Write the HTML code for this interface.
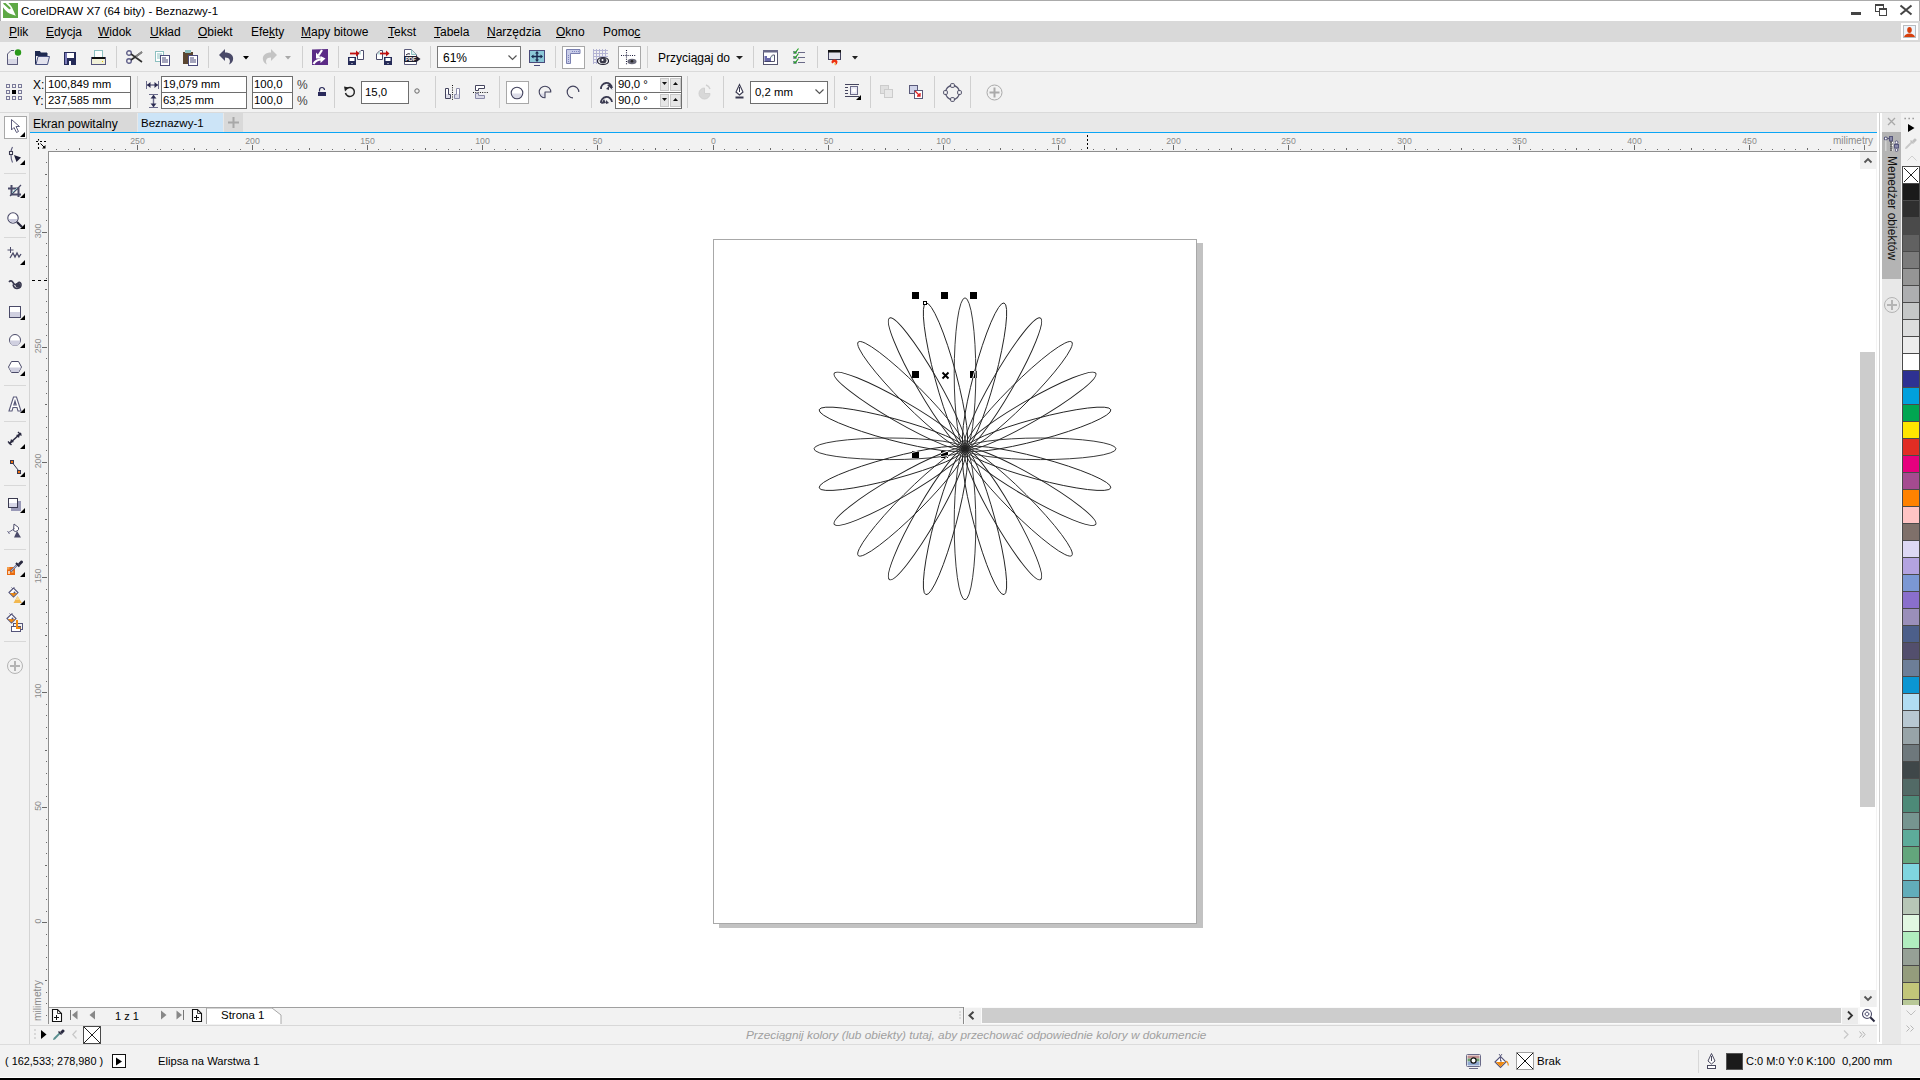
<!DOCTYPE html><html><head><meta charset="utf-8"><style>
html,body{margin:0;padding:0}
body{width:1920px;height:1080px;overflow:hidden;position:relative;background:#f2f2f2;font-family:"Liberation Sans",sans-serif;font-size:12px;color:#000}
.a{position:absolute}
.t{white-space:nowrap;line-height:1}
svg{overflow:visible}
u{text-decoration:underline;text-underline-offset:1px;text-decoration-thickness:1px}
</style></head><body>
<div class="a " style="left:0px;top:0px;width:1920px;height:1px;background:#ababab"></div>
<div class="a " style="left:0px;top:0px;width:1px;height:21px;background:#ababab"></div>
<div class="a " style="left:1919px;top:0px;width:1px;height:21px;background:#ababab"></div>
<div class="a " style="left:1px;top:1px;width:1918px;height:20px;background:#fff"></div>
<svg class="a" style="left:3px;top:3px;overflow:hidden" width="15" height="15" viewBox="0 0 15 15"><rect x="0" y="0" width="15" height="15" fill="#5ea845"/><path d="M0 0 H5.3 C7.5 2 9 4 9.8 6.2 L12.8 12.7 L6.5 10.5 C3.5 9 1.5 6.5 0 4.3 Z" fill="#fff"/><path d="M1.4 0.4 L6.6 5.2" stroke="#5ea845" stroke-width="2.1" stroke-linecap="round"/></svg>
<div class="a t" style="left:21px;top:6px;font-size:11.5px;color:#000">CorelDRAW X7 (64 bity) - Beznazwy-1</div>
<div class="a " style="left:1851px;top:12px;width:10px;height:3px;background:#444"></div>
<svg class="a" style="left:1875px;top:4px;" width="13" height="13" viewBox="0 0 13 13"><rect x="0.5" y="0.5" width="8" height="7" fill="none" stroke="#444"/><rect x="0" y="0" width="9" height="2" fill="#444"/><rect x="4.5" y="4.5" width="7" height="7" fill="#fff" stroke="#444"/><rect x="4" y="4" width="8" height="2" fill="#444"/></svg>
<svg class="a" style="left:1900px;top:5px;" width="12" height="10" viewBox="0 0 12 10"><path d="M0.5 0.5 L11.5 9.5 M11.5 0.5 L0.5 9.5" stroke="#444" stroke-width="2"/></svg>
<div class="a " style="left:0px;top:21px;width:1920px;height:21px;background:#d9d9d9"></div>
<div class="a t" style="left:9px;top:26px;font-size:12px"><u>P</u>lik</div>
<div class="a t" style="left:46px;top:26px;font-size:12px"><u>E</u>dycja</div>
<div class="a t" style="left:98px;top:26px;font-size:12px"><u>W</u>idok</div>
<div class="a t" style="left:150px;top:26px;font-size:12px"><u>U</u>kład</div>
<div class="a t" style="left:198px;top:26px;font-size:12px"><u>O</u>biekt</div>
<div class="a t" style="left:251px;top:26px;font-size:12px">Efe<u>k</u>ty</div>
<div class="a t" style="left:301px;top:26px;font-size:12px"><u>M</u>apy bitowe</div>
<div class="a t" style="left:388px;top:26px;font-size:12px"><u>T</u>ekst</div>
<div class="a t" style="left:434px;top:26px;font-size:12px"><u>T</u>abela</div>
<div class="a t" style="left:487px;top:26px;font-size:12px"><u>N</u>arzędzia</div>
<div class="a t" style="left:556px;top:26px;font-size:12px"><u>O</u>kno</div>
<div class="a t" style="left:603px;top:26px;font-size:12px">Pomo<u>c</u></div>
<div class="a " style="left:1901px;top:23px;width:17px;height:17px;background:#fff"></div>
<svg class="a" style="left:1903px;top:25px;" width="13" height="13" viewBox="0 0 13 13"><rect x="0.5" y="0.5" width="12" height="12" fill="#eef4fb" stroke="#b9bcc0"/><ellipse cx="6.5" cy="5" rx="2.3" ry="3" fill="#d6400e"/><path d="M1 12 Q2 8.5 6.5 8.5 Q11 8.5 12 12 Z" fill="#d6400e"/></svg>
<div class="a " style="left:0px;top:42px;width:1920px;height:29px;background:#f2f2f2"></div>
<div class="a " style="left:0px;top:71px;width:1920px;height:1px;background:#dadada"></div>
<svg class="a" style="left:6px;top:49px;" width="17" height="16" viewBox="0 0 17 16"><path d="M1.5 15.5 V5 L5 1.5 H8 M11.5 8 V15.5 Z" fill="none" stroke="#5a5a7a"/><path d="M1.5 15.5 H11.5 V8" fill="none" stroke="#5a5a7a"/><rect x="2" y="10" width="9" height="5" fill="#d8d8e6"/><circle cx="12" cy="3.5" r="3.2" fill="#2a9a1a"/></svg>
<svg class="a" style="left:35px;top:51px;" width="15" height="14" viewBox="0 0 15 14"><path d="M0 0 H5 L6 2 H12 V5 H0 Z" fill="#1f2a50"/><path d="M0.5 13.5 V2 H12 V5" fill="none" stroke="#1f2a50"/><path d="M1 13.5 L3 5.5 H14.5 L12.5 13.5 Z" fill="#e3e3ee" stroke="#4a5280"/></svg>
<svg class="a" style="left:64px;top:52px;" width="12" height="13" viewBox="0 0 12 13"><rect x="0" y="0" width="12" height="13" fill="#252b58"/><rect x="1" y="1" width="2" height="11" fill="#7a7ab8"/><rect x="3" y="1" width="7" height="5" fill="#fff"/><rect x="5" y="9" width="2" height="4" fill="#fff"/></svg>
<svg class="a" style="left:91px;top:50px;" width="15" height="15" viewBox="0 0 15 15"><rect x="3.5" y="0.5" width="8" height="7" fill="#fff" stroke="#8cc0c0"/><rect x="0.5" y="7.5" width="14" height="7" fill="#f0f0d8" stroke="#55557a"/><rect x="1" y="7" width="13" height="2" fill="#111"/><rect x="11" y="11" width="1" height="1" fill="#e0c000"/></svg>
<div class="a " style="left:116px;top:46px;width:1px;height:22px;background:#d0d0d0"></div>
<svg class="a" style="left:126px;top:50px;" width="17" height="14" viewBox="0 0 17 14"><circle cx="3" cy="3" r="2.3" fill="none" stroke="#60608a" stroke-width="1.4"/><circle cx="3" cy="11" r="2.3" fill="none" stroke="#60608a" stroke-width="1.4"/><path d="M5 4 L16 12 M5 10 L16 2" stroke="#303030" stroke-width="1.6"/><path d="M10 6.5 L16 2" stroke="#888" stroke-width="1.6"/></svg>
<svg class="a" style="left:155px;top:51px;" width="15" height="15" viewBox="0 0 15 15"><rect x="0.5" y="0.5" width="8" height="10" fill="#fff" stroke="#8cc0c0"/><path d="M2 3H7M2 5H7M2 7H7" stroke="#8cc0c0"/><rect x="5.5" y="4.5" width="9" height="10" fill="#fff" stroke="#4a4a7a"/><path d="M7 7H11M7 9H13M7 11H13" stroke="#4a4a7a"/></svg>
<svg class="a" style="left:183px;top:50px;" width="15" height="16" viewBox="0 0 15 16"><rect x="0" y="2" width="10" height="12" fill="#5a4630"/><rect x="2" y="0" width="6" height="3" fill="#8cc0c0"/><rect x="5.5" y="5.5" width="9" height="10" fill="#fff" stroke="#4a4a7a"/><path d="M7 8H11M7 10H13M7 12H13" stroke="#4a4a7a"/></svg>
<div class="a " style="left:208px;top:46px;width:1px;height:22px;background:#d0d0d0"></div>
<svg class="a" style="left:218px;top:49px;" width="17" height="16" viewBox="0 0 17 16"><path d="M1 6 L7 0 V3.5 C12 3.5 16 6 15 11 C14.5 13 13 15 11 15.5 C13 12 12 8.5 7 8.5 V12 Z" fill="#4a4a68"/></svg>
<svg class="a" style="left:243px;top:56px;" width="6" height="4" viewBox="0 0 6 4"><path d="M0 0H6L3 3.5Z" fill="#000"/></svg>
<svg class="a" style="left:261px;top:49px;" width="17" height="16" viewBox="0 0 17 16"><path d="M16 6 L10 0 V3.5 C5 3.5 1 6 2 11 C2.5 13 4 15 6 15.5 C4 12 5 8.5 10 8.5 V12 Z" fill="#c4c4c4"/></svg>
<svg class="a" style="left:285px;top:56px;" width="6" height="4" viewBox="0 0 6 4"><path d="M0 0H6L3 3.5Z" fill="#a8a8a8"/></svg>
<div class="a " style="left:302px;top:46px;width:1px;height:22px;background:#d0d0d0"></div>
<svg class="a" style="left:312px;top:49px;" width="16" height="16" viewBox="0 0 16 16"><path d="M0 0.5 L16 0 V16 H0Z" fill="#5b2b86"/><path d="M10 1 L6.5 6.5" stroke="#fff" stroke-width="2.2"/><path d="M4 3.5 V9.5 H9.5Z" fill="#fff"/><path d="M1.5 15 Q4 10.5 9.5 10.5" fill="none" stroke="#fff" stroke-width="2.2"/><path d="M8.5 7 L13.5 9.5 L8.5 14Z" fill="#fff"/></svg>
<div class="a " style="left:338px;top:46px;width:1px;height:22px;background:#d0d0d0"></div>
<svg class="a" style="left:347px;top:49px;" width="18" height="17" viewBox="0 0 18 17"><path d="M10.5 10.5 V5 L14 1.5 H16.5 V10.5Z" fill="#fff" stroke="#4a4a6a"/><path d="M11 5.5 L14 2 V5.5Z" fill="#bfe0e0"/><rect x="1" y="8" width="8" height="8" fill="#252b58"/><rect x="2.5" y="9" width="5" height="3" fill="#fff"/><rect x="4.5" y="14" width="1" height="1" fill="#fff"/><path d="M3 4.5 H10" stroke="#c01010" stroke-width="1.8"/><path d="M9 1.5 L12.5 4.5 L9 7.5Z" fill="#c01010"/></svg>
<svg class="a" style="left:376px;top:49px;" width="18" height="17" viewBox="0 0 18 17"><path d="M0.5 10.5 V5 L4 1.5 H6.5 V10.5Z" fill="#fff" stroke="#4a4a6a"/><path d="M1 5.5 L4 2 V5.5Z" fill="#bfe0e0"/><rect x="8" y="8" width="8" height="8" fill="#252b58"/><rect x="9.5" y="9" width="5" height="3" fill="#fff"/><rect x="11.5" y="14" width="1" height="1" fill="#fff"/><path d="M4 4.5 H11" stroke="#c01010" stroke-width="1.8"/><path d="M10 1.5 L13.5 4.5 L10 7.5Z" fill="#c01010"/></svg>
<svg class="a" style="left:404px;top:49px;" width="18" height="17" viewBox="0 0 18 17"><path d="M0.5 15.5 V0.5 H7.5 L12.5 5.5 V15.5 Z" fill="#fff" stroke="#5a5a7a"/><path d="M7.5 0.5 V5.5 H12.5" fill="#d8ecec" stroke="#8cc0c0"/><rect x="0" y="7" width="13" height="6" rx="1" fill="#1e1e2e"/><path d="M12.5 7 L16.5 10 L12.5 13Z" fill="#1e1e2e"/><path d="M2 6 Q4 4 6 5" fill="none" stroke="#1e1e2e" stroke-width="1"/><text x="1.2" y="12.2" font-size="5.6" font-family="Liberation Sans" font-weight="bold" fill="#fff" textLength="11" lengthAdjust="spacingAndGlyphs">PDF</text></svg>
<div class="a " style="left:430px;top:46px;width:1px;height:22px;background:#d0d0d0"></div>
<div class="a " style="left:437px;top:46px;width:84px;height:22px;background:#fff;border:1px solid #7a7a7a;box-sizing:border-box"></div>
<div class="a t" style="left:443px;top:52px;font-size:12px">61%</div>
<svg class="a" style="left:508px;top:55px;" width="9" height="6" viewBox="0 0 9 6"><path d="M0.5 0.5 L4.5 4.5 L8.5 0.5" fill="none" stroke="#555" stroke-width="1.2"/></svg>
<svg class="a" style="left:529px;top:50px;" width="16" height="16" viewBox="0 0 16 16"><rect x="0.5" y="0.5" width="15" height="12" fill="#8cc8d8" stroke="#4a4a7a"/><path d="M8 2V11M3 6.5H13" stroke="#1a2a50" stroke-width="1.5"/><path d="M8 1L6 3.5H10ZM8 12L6 9.5H10ZM2 6.5L4.5 4.5V8.5ZM14 6.5L11.5 4.5V8.5Z" fill="#1a2a50"/><path d="M5 15.5H11" stroke="#4a4a7a"/></svg>
<div class="a " style="left:555px;top:46px;width:1px;height:22px;background:#d0d0d0"></div>
<div class="a " style="left:562px;top:46px;width:23px;height:23px;background:#fff;border:1px solid #a8a8a8;box-sizing:border-box"></div>
<svg class="a" style="left:566px;top:49px;" width="15" height="15" viewBox="0 0 15 15"><path d="M0.5 0.5 H14 V4.5 H4.5 V14.5 H0.5 Z" fill="#c8cce8" stroke="#7a80b0"/><path d="M6 2.5H13M2.5 6V13" stroke="#8088c0" stroke-dasharray="1 1"/></svg>
<svg class="a" style="left:593px;top:49px;" width="17" height="17" viewBox="0 0 17 17"><path d="M0.5 0V15M3.5 0V15M6.5 0V9M9.5 0V8M12.5 0V8M0 1.5H15M0 4.5H15M0 7.5H15M0 10.5H5M0 13.5H5" stroke="#b4b4d4"/><ellipse cx="10" cy="12" rx="5.5" ry="3.5" fill="#fff" stroke="#1e1e2e" stroke-width="1.2"/><ellipse cx="10" cy="11.5" rx="3.5" ry="3" fill="#3a3a4a"/><circle cx="9.5" cy="11" r="1" fill="#fff"/></svg>
<div class="a " style="left:618px;top:46px;width:23px;height:23px;background:#fff;border:1px solid #a8a8a8;box-sizing:border-box"></div>
<svg class="a" style="left:620px;top:49px;" width="18" height="17" viewBox="0 0 18 17"><path d="M6.5 1V16M1 6.5H16" stroke="#1a1a3a" stroke-dasharray="1 1.2" stroke-width="1.1"/><ellipse cx="12" cy="12.5" rx="4.5" ry="2.8" fill="#6a6a7a"/><circle cx="12" cy="12.3" r="1.3" fill="#222"/></svg>
<div class="a " style="left:647px;top:46px;width:1px;height:22px;background:#d0d0d0"></div>
<div class="a t" style="left:658px;top:52px;font-size:12px">Przyciągaj do</div>
<svg class="a" style="left:736px;top:56px;" width="7" height="4" viewBox="0 0 7 4"><path d="M0 0H7L3.5 3.5Z" fill="#222"/></svg>
<div class="a " style="left:753px;top:46px;width:1px;height:22px;background:#d0d0d0"></div>
<svg class="a" style="left:762px;top:49px;" width="17" height="17" viewBox="0 0 17 17"><rect x="1.5" y="1.5" width="14" height="14" fill="#fff" stroke="#55556e"/><rect x="1" y="1" width="15" height="2.5" fill="#6a6a88"/><path d="M8.5 8.5 L10.5 6 H12.5 V12.5 H8.5Z" fill="#fff" stroke="#55556e"/><path d="M9 8.5 L10.5 6.5 V8.5Z" fill="#a8d8d0"/><path d="M2.5 7 H5 V9 H9 V13 H2.5Z" fill="#6a6aaa"/><rect x="2.5" y="12" width="6.5" height="1" fill="#44446a"/></svg>
<svg class="a" style="left:793px;top:48px;" width="13" height="16" viewBox="0 0 13 16"><rect x="0.5" y="3.5" width="3" height="2" fill="none" stroke="#8a8aa8" stroke-width="0.8"/><rect x="0.5" y="8.5" width="3" height="2" fill="none" stroke="#8a8aa8" stroke-width="0.8"/><rect x="0.5" y="13.5" width="3" height="2" fill="none" stroke="#8a8aa8" stroke-width="0.8"/><path d="M0.8 3.5L2 5L5.5 0.5M0.8 8.5L2 10L5.5 5.5M0.8 13.5L2 15L5.5 10.5" fill="none" stroke="#22a022" stroke-width="1.2"/><path d="M5 4.5H12M5 9.5H12M5 14.5H12" stroke="#6a6a88" stroke-width="1.1"/></svg>
<div class="a " style="left:817px;top:46px;width:1px;height:22px;background:#d0d0d0"></div>
<svg class="a" style="left:827px;top:49px;" width="15" height="17" viewBox="0 0 15 17"><rect x="1.5" y="1.5" width="12" height="9" fill="#e4e4ec" stroke="#44445e"/><rect x="1" y="1" width="13" height="2.5" fill="#111"/><path d="M4.5 13 Q4.5 10.5 7.5 10.5 Q10.5 10.5 10.5 13 Q10.5 15.5 8 16.5 Q9.5 14 7.5 13 Q6 13.5 5.5 14.5 Q4.5 14 4.5 13Z" fill="#ee3010"/><path d="M7.5 13.5 Q9 14.5 8 16.5 Q7 15.5 7.5 13.5Z" fill="#ffd020"/></svg>
<svg class="a" style="left:852px;top:56px;" width="6" height="4" viewBox="0 0 6 4"><path d="M0 0H6L3 3.5Z" fill="#222"/></svg>
<div class="a " style="left:0px;top:112px;width:1920px;height:1px;background:#dadada"></div>
<svg class="a" style="left:6px;top:84px;" width="16" height="16" viewBox="0 0 16 16"><rect x="0.5" y="0.5" width="3" height="3" fill="none" stroke="#7a7a9a"/><rect x="0.5" y="6.5" width="3" height="3" fill="none" stroke="#7a7a9a"/><rect x="0.5" y="12.5" width="3" height="3" fill="none" stroke="#7a7a9a"/><rect x="6.5" y="0.5" width="3" height="3" fill="none" stroke="#7a7a9a"/><rect x="6.5" y="12.5" width="3" height="3" fill="none" stroke="#7a7a9a"/><rect x="12.5" y="0.5" width="3" height="3" fill="none" stroke="#7a7a9a"/><rect x="12.5" y="6.5" width="3" height="3" fill="none" stroke="#7a7a9a"/><rect x="12.5" y="12.5" width="3" height="3" fill="none" stroke="#7a7a9a"/><rect x="6" y="6" width="4" height="4" fill="#000"/></svg>
<div class="a t" style="left:33px;top:79px;font-size:12px">X:</div>
<div class="a t" style="left:33px;top:95px;font-size:12px">Y:</div>
<div class="a " style="left:45px;top:76px;width:86px;height:17px;background:#fff;border:1px solid #6e6e6e;box-sizing:border-box"></div>
<div class="a t" style="left:48px;top:79px;font-size:11.4px">100,849 mm</div>
<div class="a " style="left:45px;top:92px;width:86px;height:17px;background:#fff;border:1px solid #6e6e6e;box-sizing:border-box"></div>
<div class="a t" style="left:48px;top:95px;font-size:11.4px">237,585 mm</div>
<div class="a " style="left:137px;top:76px;width:1px;height:32px;background:#d0d0d0"></div>
<svg class="a" style="left:146px;top:81px;" width="13" height="8" viewBox="0 0 13 8"><path d="M0.5 0V8M12.5 0V8" stroke="#6a6a8a"/><path d="M1 4H12" stroke="#6a6a8a" stroke-width="1.4"/><path d="M1 4L4.5 1V7ZM12 4L8.5 1V7Z" fill="#2a2a50"/></svg>
<svg class="a" style="left:149px;top:94px;" width="9" height="14" viewBox="0 0 9 14"><path d="M0 0.5H9M0 13.5H9" stroke="#6a6a8a"/><path d="M4.5 1V13" stroke="#6a6a8a" stroke-width="1.4"/><path d="M4.5 1L1.5 4.5H7.5ZM4.5 13L1.5 9.5H7.5Z" fill="#2a2a50"/></svg>
<div class="a " style="left:161px;top:76px;width:86px;height:17px;background:#fff;border:1px solid #6e6e6e;box-sizing:border-box"></div>
<div class="a t" style="left:163px;top:79px;font-size:11.4px">19,079 mm</div>
<div class="a " style="left:161px;top:92px;width:86px;height:17px;background:#fff;border:1px solid #6e6e6e;box-sizing:border-box"></div>
<div class="a t" style="left:163px;top:95px;font-size:11.4px">63,25 mm</div>
<div class="a " style="left:252px;top:76px;width:41px;height:17px;background:#fff;border:1px solid #6e6e6e;box-sizing:border-box"></div>
<div class="a t" style="left:254px;top:79px;font-size:11.4px">100,0</div>
<div class="a " style="left:252px;top:92px;width:41px;height:17px;background:#fff;border:1px solid #6e6e6e;box-sizing:border-box"></div>
<div class="a t" style="left:254px;top:95px;font-size:11.4px">100,0</div>
<div class="a t" style="left:297px;top:79px;font-size:12px;color:#444">%</div>
<div class="a t" style="left:297px;top:95px;font-size:12px;color:#444">%</div>
<svg class="a" style="left:318px;top:88px;" width="8" height="8" viewBox="0 0 8 8"><path d="M1.5 3.5V2A2.5 2.5 0 0 1 6.5 2" fill="none" stroke="#2a2a5a" stroke-width="1.2"/><rect x="0" y="4" width="8" height="4" fill="#2a2a5a"/></svg>
<div class="a " style="left:334px;top:76px;width:1px;height:32px;background:#d0d0d0"></div>
<svg class="a" style="left:344px;top:86px;" width="12" height="12" viewBox="0 0 12 12"><path d="M3 2.5 A4.5 4.5 0 1 1 1.5 7" fill="none" stroke="#222" stroke-width="1.5"/><path d="M0 0.5 L5 1.5 L1 5.5Z" fill="#222"/></svg>
<div class="a " style="left:361px;top:81px;width:48px;height:23px;background:#fff;border:1px solid #6e6e6e;box-sizing:border-box"></div>
<div class="a t" style="left:365px;top:87px;font-size:11.4px">15,0</div>
<svg class="a" style="left:414px;top:88px;" width="6" height="6" viewBox="0 0 6 6"><circle cx="3" cy="3" r="2.2" fill="none" stroke="#666"/></svg>
<div class="a " style="left:435px;top:76px;width:1px;height:32px;background:#d0d0d0"></div>
<svg class="a" style="left:444px;top:84px;" width="17" height="17" viewBox="0 0 17 17"><path d="M1.5 4.5 H4.5 V10.5 H6.5 V14.5 H1.5 Z" fill="#fff" stroke="#44445e"/><path d="M2 10 H4 V11 H6 V14 H2Z" fill="#dcdce8"/><path d="M15.5 4.5 H12.5 V10.5 H10.5 V14.5 H15.5 Z" fill="#fff" stroke="#8a8aa8"/><path d="M15 10 H13 V11 H11 V14 H15Z" fill="#dcdce8"/><path d="M8.5 1V16" stroke="#111" stroke-dasharray="1 1.3"/></svg>
<svg class="a" style="left:472px;top:84px;" width="17" height="17" viewBox="0 0 17 17"><path d="M3.5 1.5 H12.5 V4.5 H6.5 V6.5 H3.5 Z" fill="#fff" stroke="#44445e"/><path d="M3.5 14.5 H12.5 V11.5 H6.5 V9.5 H3.5 Z" fill="#fff" stroke="#8a8aa8"/><path d="M4 10 H6 V12 H12 V14 H4Z" fill="#dcdce8"/><path d="M1 8.5H16" stroke="#111" stroke-dasharray="1 1.3"/></svg>
<div class="a " style="left:499px;top:76px;width:1px;height:32px;background:#d0d0d0"></div>
<div class="a " style="left:506px;top:81px;width:23px;height:23px;background:#fff;border:1px solid #a8a8a8;box-sizing:border-box"></div>
<svg class="a" style="left:510px;top:86px;" width="14" height="14" viewBox="0 0 14 14"><path d="M1.2 7.5 H12.8 A5.8 5.8 0 0 1 1.2 7.5Z" fill="#dcdce8"/><circle cx="7" cy="7" r="5.8" fill="none" stroke="#44445e" stroke-width="1.1"/></svg>
<svg class="a" style="left:538px;top:85px;" width="14" height="14" viewBox="0 0 14 14"><path d="M1.5 8.5 H7 V13 A5.6 5.6 0 0 1 1.5 8.5Z" fill="#dcdce8"/><path d="M7 12.8 A5.8 5.8 0 1 1 12.8 7 H7 Z" fill="none" stroke="#44445e" stroke-width="1.1" stroke-linejoin="round"/></svg>
<svg class="a" style="left:566px;top:85px;" width="14" height="14" viewBox="0 0 14 14"><path d="M7 12.8 A5.8 5.8 0 1 1 12.8 7" fill="none" stroke="#44445e" stroke-width="1.2"/></svg>
<div class="a " style="left:591px;top:76px;width:1px;height:32px;background:#d0d0d0"></div>
<svg class="a" style="left:600px;top:82px;" width="14" height="9" viewBox="0 0 14 9"><path d="M1 7 A5.5 5.5 0 0 1 12 6" fill="none" stroke="#3a3a50" stroke-width="1.8"/><path d="M7 3 L12.5 8 L10 2Z" fill="#3a3a50"/><path d="M6 7 L9 4 L9 8Z" fill="#3a3a50"/></svg>
<svg class="a" style="left:600px;top:96px;" width="14" height="9" viewBox="0 0 14 9"><path d="M1 7 A5.5 5.5 0 0 1 12 6" fill="none" stroke="#3a3a50" stroke-width="1.8"/><path d="M4 3 L1 8 L6 7Z" fill="#3a3a50"/><path d="M6 8 L6 4 L9 7Z" fill="#3a3a50"/></svg>
<div class="a " style="left:615px;top:76px;width:67px;height:17px;background:#fff;border:1px solid #6e6e6e;box-sizing:border-box"></div>
<div class="a t" style="left:618px;top:79px;font-size:11.4px">90,0 °</div>
<div class="a " style="left:615px;top:92px;width:67px;height:17px;background:#fff;border:1px solid #6e6e6e;box-sizing:border-box"></div>
<div class="a t" style="left:618px;top:95px;font-size:11.4px">90,0 °</div>
<div class="a " style="left:660px;top:78px;width:9px;height:13px;background:#e6e6e6;border:1px solid #c8c8c8;box-sizing:border-box"></div>
<div class="a " style="left:670px;top:78px;width:11px;height:13px;background:#e6e6e6;border:1px solid #c8c8c8;box-sizing:border-box"></div>
<svg class="a" style="left:662px;top:82px;" width="5" height="3" viewBox="0 0 5 3"><path d="M0 0H5L2.5 3Z" fill="#111"/></svg>
<svg class="a" style="left:673px;top:82px;" width="5" height="3" viewBox="0 0 5 3"><path d="M0 3H5L2.5 0Z" fill="#111"/></svg>
<div class="a " style="left:660px;top:94px;width:9px;height:13px;background:#e6e6e6;border:1px solid #c8c8c8;box-sizing:border-box"></div>
<div class="a " style="left:670px;top:94px;width:11px;height:13px;background:#e6e6e6;border:1px solid #c8c8c8;box-sizing:border-box"></div>
<svg class="a" style="left:662px;top:98px;" width="5" height="3" viewBox="0 0 5 3"><path d="M0 0H5L2.5 3Z" fill="#111"/></svg>
<svg class="a" style="left:673px;top:98px;" width="5" height="3" viewBox="0 0 5 3"><path d="M0 3H5L2.5 0Z" fill="#111"/></svg>
<div class="a " style="left:687px;top:76px;width:1px;height:32px;background:#d0d0d0"></div>
<svg class="a" style="left:698px;top:85px;" width="13" height="14" viewBox="0 0 13 14"><path d="M6.5 3 A5.5 5.5 0 1 0 12 8.5 H6.5Z" fill="#d8d8d8" stroke="#d0d0d0"/><path d="M8 0 A6 6 0 0 1 12 4" fill="none" stroke="#d0d0d0" stroke-width="1.4"/></svg>
<div class="a " style="left:723px;top:76px;width:1px;height:32px;background:#d0d0d0"></div>
<svg class="a" style="left:735px;top:84px;" width="9" height="15" viewBox="0 0 9 15"><path d="M4.5 0.5 L1 8 L4.5 11 L8 8Z" fill="#fff" stroke="#3a3a50" stroke-width="1.1"/><path d="M4.5 3V8" stroke="#3a3a50"/><rect x="0.5" y="12.5" width="8" height="2" fill="#3a3a50"/></svg>
<div class="a " style="left:750px;top:81px;width:78px;height:23px;background:#fff;border:1px solid #6e6e6e;box-sizing:border-box"></div>
<div class="a t" style="left:755px;top:87px;font-size:11.4px">0,2 mm</div>
<svg class="a" style="left:815px;top:89px;" width="9" height="6" viewBox="0 0 9 6"><path d="M0.5 0.5 L4.5 4.5 L8.5 0.5" fill="none" stroke="#555" stroke-width="1.2"/></svg>
<div class="a " style="left:834px;top:76px;width:1px;height:32px;background:#d0d0d0"></div>
<svg class="a" style="left:845px;top:84px;" width="16" height="16" viewBox="0 0 16 16"><path d="M0 0.5H14M0 3.5H3M0 6.5H3M0 9.5H3M0 12.5H14" stroke="#44445e"/><rect x="5" y="2" width="8" height="9" fill="#6a6a88"/><rect x="6" y="3" width="6" height="7" fill="#e8e8f4"/><circle cx="9" cy="6.5" r="2" fill="#fff"/><path d="M16 11V16H11Z" fill="#000"/></svg>
<div class="a " style="left:870px;top:76px;width:1px;height:32px;background:#d0d0d0"></div>
<svg class="a" style="left:880px;top:85px;" width="14" height="14" viewBox="0 0 14 14"><rect x="0.5" y="0.5" width="8" height="8" fill="#e0e0e0" stroke="#ccc"/><rect x="4.5" y="4.5" width="8" height="8" fill="#e8e8e8" stroke="#ccc"/></svg>
<svg class="a" style="left:909px;top:85px;" width="15" height="15" viewBox="0 0 15 15"><rect x="0.5" y="0.5" width="8" height="8" fill="#d0d4ea" stroke="#5a5a7a"/><rect x="5.5" y="5.5" width="8" height="8" fill="#fff" stroke="#5a5a7a"/><path d="M6 6L11 11M11 8V11H8" stroke="#e02020" stroke-width="1.3" fill="none"/></svg>
<div class="a " style="left:934px;top:76px;width:1px;height:32px;background:#d0d0d0"></div>
<svg class="a" style="left:943px;top:83px;" width="19" height="19" viewBox="0 0 19 19"><circle cx="9.5" cy="9.5" r="7" fill="none" stroke="#55556e" stroke-width="1.3"/><rect x="7.7" y="0.7" width="3.6" height="3.6" rx="0.6" fill="#fff" stroke="#44445e" stroke-width="1"/><rect x="7.7" y="14.7" width="3.6" height="3.6" rx="0.6" fill="#fff" stroke="#44445e" stroke-width="1"/><rect x="0.7" y="7.7" width="3.6" height="3.6" rx="0.6" fill="#fff" stroke="#44445e" stroke-width="1"/><rect x="14.7" y="7.7" width="3.6" height="3.6" rx="0.6" fill="#fff" stroke="#44445e" stroke-width="1"/></svg>
<div class="a " style="left:970px;top:76px;width:1px;height:32px;background:#d0d0d0"></div>
<svg class="a" style="left:986px;top:84px;" width="17" height="17" viewBox="0 0 17 17"><circle cx="8.5" cy="8.5" r="7.5" fill="none" stroke="#aaa"/><path d="M8.5 3.5V13.5M3.5 8.5H13.5" stroke="#aaa" stroke-width="2"/></svg>
<div class="a " style="left:0px;top:113px;width:29px;height:931px;background:#f2f2f2"></div>
<div class="a " style="left:29px;top:113px;width:1px;height:931px;background:#d4d4d4"></div>
<div class="a " style="left:4px;top:116px;width:23px;height:23px;background:#fff;border:1px solid #a8a8a8;box-sizing:border-box"></div>
<svg class="a" style="left:11px;top:119px;" width="10" height="14" viewBox="0 0 10 14"><path d="M0.5 0.5 V11 L3 8.5 L5.5 13.5 L7.5 12.5 L5 7.5 H8.5 Z" fill="#fff" stroke="#5a5a7a" stroke-linejoin="round"/></svg>
<svg class="a" style="left:20px;top:132px;" width="5" height="5" viewBox="0 0 5 5"><path d="M5 0V5H0Z" fill="#000"/></svg>
<svg class="a" style="left:8px;top:146px;" width="14" height="18" viewBox="0 0 14 18"><path d="M4.5 1 Q3.5 3 3 5" fill="none" stroke="#5a5a7a" stroke-width="1.1"/><rect x="1.5" y="5.5" width="3" height="3" fill="#fff" stroke="#3a3a50" stroke-width="1.1"/><path d="M3 9 Q3 13.5 4.5 16.5" fill="none" stroke="#5a5a7a" stroke-width="1.1"/><path d="M6 9 L13 11.5 L8.5 16Z" fill="#1e1e38"/></svg>
<svg class="a" style="left:20px;top:160px;" width="5" height="5" viewBox="0 0 5 5"><path d="M5 0V5H0Z" fill="#000"/></svg>
<div class="a " style="left:4px;top:173px;width:22px;height:1px;background:#d8d8d8"></div>
<svg class="a" style="left:8px;top:184px;" width="14" height="14" viewBox="0 0 14 14"><path d="M0 4.5H10.5V13M3.5 1V10.5H13" fill="none" stroke="#4a4a68" stroke-width="2"/><path d="M2 12L13 1" stroke="#4a4a68" stroke-width="1.2"/><path d="M4 9L9 4" stroke="#8cc8c8"/></svg>
<svg class="a" style="left:20px;top:193px;" width="5" height="5" viewBox="0 0 5 5"><path d="M5 0V5H0Z" fill="#000"/></svg>
<svg class="a" style="left:7px;top:212px;" width="16" height="16" viewBox="0 0 16 16"><circle cx="6" cy="6" r="5.2" fill="#fff" stroke="#4a4a68" stroke-width="1.1"/><path d="M1.5 7 H10.5 A4.8 4.8 0 0 1 1.5 7Z" fill="#c8c8dc"/><path d="M10 10L15 15" stroke="#2a2a40" stroke-width="2.2"/></svg>
<svg class="a" style="left:20px;top:224px;" width="5" height="5" viewBox="0 0 5 5"><path d="M5 0V5H0Z" fill="#000"/></svg>
<div class="a " style="left:4px;top:237px;width:22px;height:1px;background:#d8d8d8"></div>
<svg class="a" style="left:7px;top:247px;" width="16" height="13" viewBox="0 0 16 13"><path d="M3.5 0V6M0.5 3H6.5" stroke="#4a4a68" stroke-width="1"/><path d="M3 11 L6 6 L8 10 L10 6 L12 10 L14 7" fill="none" stroke="#4a4a68" stroke-width="1.3"/></svg>
<svg class="a" style="left:20px;top:260px;" width="5" height="5" viewBox="0 0 5 5"><path d="M5 0V5H0Z" fill="#000"/></svg>
<svg class="a" style="left:8px;top:280px;" width="14" height="9" viewBox="0 0 14 9"><path d="M1 2 Q3 -0.5 5 2.5 Q7 6 9.5 3.5 Q12 1 13 4 Q13.5 8 9 8.5 Q6 8.5 5 4.5" fill="none" stroke="#3a3a50" stroke-width="1.6"/><circle cx="10" cy="5.3" r="2.5" fill="#3a3a50"/></svg>
<svg class="a" style="left:9px;top:306px;" width="13" height="13" viewBox="0 0 13 13"><rect x="0.5" y="0.5" width="11" height="11" fill="#fff" stroke="#4a4a68"/><rect x="1" y="6" width="10" height="5" fill="#d0d0e0"/></svg>
<svg class="a" style="left:20px;top:315px;" width="5" height="5" viewBox="0 0 5 5"><path d="M5 0V5H0Z" fill="#000"/></svg>
<svg class="a" style="left:9px;top:334px;" width="13" height="13" viewBox="0 0 13 13"><circle cx="6" cy="6" r="5.5" fill="#fff" stroke="#4a4a68"/><path d="M0.8 6.5 H11.2 A5.2 5.2 0 0 1 0.8 6.5Z" fill="#d0d0e0"/></svg>
<svg class="a" style="left:20px;top:343px;" width="5" height="5" viewBox="0 0 5 5"><path d="M5 0V5H0Z" fill="#000"/></svg>
<svg class="a" style="left:8px;top:361px;" width="14" height="12" viewBox="0 0 14 12"><path d="M3.5 0.5 H10.5 L13.5 6 L10.5 11.5 H3.5 L0.5 6Z" fill="#fff" stroke="#4a4a68"/><path d="M1 6.5H13L10.5 11H3.5Z" fill="#d0d0e0"/></svg>
<svg class="a" style="left:20px;top:371px;" width="5" height="5" viewBox="0 0 5 5"><path d="M5 0V5H0Z" fill="#000"/></svg>
<div class="a " style="left:4px;top:385px;width:22px;height:1px;background:#d8d8d8"></div>
<svg class="a" style="left:8px;top:396px;" width="14" height="16" viewBox="0 0 14 16"><path d="M1 15 L5.5 1 H8.5 L13 15 H10 L9 11.5 H5 L4 15 Z M5.8 9 H8.2 L7 5Z" fill="#fff" stroke="#5a5a7a" stroke-width="1.1" fill-rule="evenodd"/></svg>
<svg class="a" style="left:20px;top:408px;" width="5" height="5" viewBox="0 0 5 5"><path d="M5 0V5H0Z" fill="#000"/></svg>
<div class="a " style="left:4px;top:421px;width:22px;height:1px;background:#d8d8d8"></div>
<svg class="a" style="left:8px;top:432px;" width="14" height="13" viewBox="0 0 14 13"><path d="M1 12 L13 1" stroke="#2a2a40" stroke-width="1.6"/><path d="M0 9.5 L3.5 13 M10 0 L13.5 3.5" stroke="#2a2a40" stroke-width="1.4"/><path d="M2 11 L3 7 L6 10Z M12 2 L8 3 L11 6Z" fill="#2a2a40"/></svg>
<svg class="a" style="left:20px;top:444px;" width="5" height="5" viewBox="0 0 5 5"><path d="M5 0V5H0Z" fill="#000"/></svg>
<svg class="a" style="left:10px;top:460px;" width="13" height="14" viewBox="0 0 13 14"><rect x="0.5" y="0.5" width="3" height="3" fill="#f07010" stroke="#3a3a50"/><rect x="7.5" y="10.5" width="3" height="3" fill="#f07010" stroke="#3a3a50"/><path d="M3 3.5L8.5 10.5" stroke="#3a3a50"/></svg>
<svg class="a" style="left:20px;top:472px;" width="5" height="5" viewBox="0 0 5 5"><path d="M5 0V5H0Z" fill="#000"/></svg>
<div class="a " style="left:4px;top:485px;width:22px;height:1px;background:#d8d8d8"></div>
<svg class="a" style="left:8px;top:498px;" width="13" height="13" viewBox="0 0 13 13"><rect x="3" y="3" width="10" height="10" fill="#9a9ab8"/><rect x="0.5" y="0.5" width="9" height="9" fill="#fff" stroke="#3a3a50"/><rect x="1" y="5" width="8" height="4" fill="#d8d8e8"/></svg>
<svg class="a" style="left:20px;top:508px;" width="5" height="5" viewBox="0 0 5 5"><path d="M5 0V5H0Z" fill="#000"/></svg>
<svg class="a" style="left:7px;top:523px;" width="16" height="15" viewBox="0 0 16 15"><path d="M7 1 L11.5 4.5 A3 3 0 0 1 6.5 7.5 Z" fill="#fff" stroke="#4a4a68"/><path d="M7.5 5.5 L1.5 9.5 M0.5 8 L2.5 11" stroke="#6a6a88"/><path d="M10 8 L14 14.5 H7Z" fill="#4a4a68"/></svg>
<div class="a " style="left:4px;top:549px;width:22px;height:1px;background:#d8d8d8"></div>
<svg class="a" style="left:6px;top:558px;" width="18" height="18" viewBox="0 0 18 18"><rect x="1" y="9" width="8" height="8" fill="#e86a10"/><rect x="1" y="9" width="2.5" height="2.5" fill="#f4a050"/><rect x="5.5" y="13" width="2" height="2" fill="#f4a050"/><rect x="2" y="13" width="2" height="3" fill="#f8d0b0"/><path d="M4.5 13.5 L12 6" stroke="#6a7090" stroke-width="2"/><path d="M5 13 L11.5 6.5" stroke="#c8c8d8" stroke-width="0.7"/><path d="M10 5 L13.5 8.5" stroke="#2a2a40" stroke-width="2"/><path d="M12 5.5 L15 2.5 A1.8 1.8 0 0 1 17 4.5 L14 7.5Z" fill="#2a2a40"/></svg>
<svg class="a" style="left:20px;top:572px;" width="5" height="5" viewBox="0 0 5 5"><path d="M5 0V5H0Z" fill="#000"/></svg>
<svg class="a" style="left:8px;top:587px;" width="18" height="17" viewBox="0 0 18 17"><path d="M1 5.5 L5.5 1 L10 5.5 L5.5 10 Z" fill="#fff" stroke="#55557a" stroke-width="1.1"/><path d="M2 6 L9 6 L5.5 9.5Z" fill="#f08a10"/><circle cx="6.5" cy="5.5" r="1" fill="#55557a"/><path d="M3.5 0.5 L5 2 L6.5 0.5" fill="none" stroke="#55557a" stroke-width="0.9"/><path d="M9.5 9 L14 16 H5.5 Z" fill="#f2b850"/><path d="M9.5 9 L12 13 H7.5Z" fill="#f8d890"/></svg>
<svg class="a" style="left:20px;top:600px;" width="5" height="5" viewBox="0 0 5 5"><path d="M5 0V5H0Z" fill="#000"/></svg>
<svg class="a" style="left:6px;top:613px;" width="18" height="19" viewBox="0 0 18 19"><path d="M1 5.5 L5.5 1 L10 5.5 L5.5 10 Z" fill="#fff" stroke="#55557a" stroke-width="1.1"/><path d="M2 6 L9 6 L5.5 9.5Z" fill="#f08a10"/><circle cx="6.5" cy="5.5" r="1" fill="#55557a"/><path d="M3.5 0.5 L5 2 L6.5 0.5" fill="none" stroke="#55557a" stroke-width="0.9"/><rect x="7.5" y="10.5" width="9" height="6" fill="none" stroke="#55557a"/><rect x="5.5" y="13.5" width="9" height="5" fill="#fff" stroke="#55557a"/><path d="M11 7 V15 H14.5" fill="none" stroke="#f08a10" stroke-width="2"/></svg>
<div class="a " style="left:4px;top:641px;width:22px;height:1px;background:#d8d8d8"></div>
<svg class="a" style="left:7px;top:658px;" width="17" height="17" viewBox="0 0 17 17"><circle cx="8" cy="8" r="7.5" fill="none" stroke="#b4b4b4"/><path d="M8 3V13M3 8H13" stroke="#b4b4b4" stroke-width="2"/></svg>
<div class="a " style="left:30px;top:113px;width:1847px;height:19px;background:#e8e8e8"></div>
<div class="a " style="left:30px;top:113px;width:107px;height:19px;background:#d9d9d9"></div>
<div class="a t" style="left:33px;top:118px;font-size:12px">Ekran powitalny</div>
<div class="a " style="left:138px;top:113px;width:85px;height:19px;background:#cce4f7"></div>
<div class="a t" style="left:141px;top:118px;font-size:11.5px">Beznazwy-1</div>
<div class="a " style="left:224px;top:113px;width:19px;height:19px;background:#d9d9d9"></div>
<svg class="a" style="left:228px;top:117px;" width="11" height="11" viewBox="0 0 11 11"><path d="M5.5 0V11M0 5.5H11" stroke="#a8a8a8" stroke-width="2"/></svg>
<div class="a " style="left:30px;top:132px;width:1847px;height:1px;background:#0aa5f5"></div>
<div class="a " style="left:30px;top:133px;width:1847px;height:18px;background:#f2f2f2"></div>
<div class="a " style="left:30px;top:133px;width:18px;height:891px;background:#f2f2f2"></div>
<div class="a " style="left:48px;top:151px;width:1829px;height:1px;background:#8e8e8e"></div>
<div class="a " style="left:48px;top:151px;width:1px;height:873px;background:#8e8e8e"></div>
<svg class="a" style="left:35px;top:138px;" width="12" height="12" viewBox="0 0 12 12"><path d="M1 3.5H3M5 3.5H7M9 3.5H11M3.5 1V2.5M3.5 5V7M3.5 9V11" stroke="#000" stroke-width="1.1"/><path d="M5.5 5.5L9.5 9.5" stroke="#000" stroke-width="1"/><path d="M10.5 7 V10.5 H7Z" fill="#000"/></svg>
<svg class="a" style="left:0;top:0" width="1920" height="160" viewBox="0 0 1920 160" font-family="Liberation Sans"><rect x="56" y="149" width="1" height="1" fill="#6a6a6a"/><rect x="68" y="149" width="1" height="1" fill="#6a6a6a"/><rect x="79" y="148" width="1" height="2" fill="#6a6a6a"/><rect x="91" y="149" width="1" height="1" fill="#6a6a6a"/><rect x="102" y="149" width="1" height="1" fill="#6a6a6a"/><rect x="114" y="149" width="1" height="1" fill="#6a6a6a"/><rect x="125" y="149" width="1" height="1" fill="#6a6a6a"/><rect x="137" y="145" width="1" height="5" fill="#6a6a6a"/><text x="130.24" y="144" font-size="9.8" textLength="14.55" lengthAdjust="spacingAndGlyphs" fill="#8a8a8a">250</text><rect x="148" y="149" width="1" height="1" fill="#6a6a6a"/><rect x="160" y="149" width="1" height="1" fill="#6a6a6a"/><rect x="171" y="149" width="1" height="1" fill="#6a6a6a"/><rect x="183" y="149" width="1" height="1" fill="#6a6a6a"/><rect x="194" y="148" width="1" height="2" fill="#6a6a6a"/><rect x="206" y="149" width="1" height="1" fill="#6a6a6a"/><rect x="217" y="149" width="1" height="1" fill="#6a6a6a"/><rect x="229" y="149" width="1" height="1" fill="#6a6a6a"/><rect x="240" y="149" width="1" height="1" fill="#6a6a6a"/><rect x="252" y="145" width="1" height="5" fill="#6a6a6a"/><text x="245.24" y="144" font-size="9.8" textLength="14.55" lengthAdjust="spacingAndGlyphs" fill="#8a8a8a">200</text><rect x="263" y="149" width="1" height="1" fill="#6a6a6a"/><rect x="275" y="149" width="1" height="1" fill="#6a6a6a"/><rect x="286" y="149" width="1" height="1" fill="#6a6a6a"/><rect x="298" y="149" width="1" height="1" fill="#6a6a6a"/><rect x="309" y="148" width="1" height="2" fill="#6a6a6a"/><rect x="321" y="149" width="1" height="1" fill="#6a6a6a"/><rect x="332" y="149" width="1" height="1" fill="#6a6a6a"/><rect x="344" y="149" width="1" height="1" fill="#6a6a6a"/><rect x="355" y="149" width="1" height="1" fill="#6a6a6a"/><rect x="367" y="145" width="1" height="5" fill="#6a6a6a"/><text x="360.24" y="144" font-size="9.8" textLength="14.55" lengthAdjust="spacingAndGlyphs" fill="#8a8a8a">150</text><rect x="378" y="149" width="1" height="1" fill="#6a6a6a"/><rect x="390" y="149" width="1" height="1" fill="#6a6a6a"/><rect x="402" y="149" width="1" height="1" fill="#6a6a6a"/><rect x="413" y="149" width="1" height="1" fill="#6a6a6a"/><rect x="425" y="148" width="1" height="2" fill="#6a6a6a"/><rect x="436" y="149" width="1" height="1" fill="#6a6a6a"/><rect x="448" y="149" width="1" height="1" fill="#6a6a6a"/><rect x="459" y="149" width="1" height="1" fill="#6a6a6a"/><rect x="471" y="149" width="1" height="1" fill="#6a6a6a"/><rect x="482" y="145" width="1" height="5" fill="#6a6a6a"/><text x="475.24" y="144" font-size="9.8" textLength="14.55" lengthAdjust="spacingAndGlyphs" fill="#8a8a8a">100</text><rect x="494" y="149" width="1" height="1" fill="#6a6a6a"/><rect x="505" y="149" width="1" height="1" fill="#6a6a6a"/><rect x="517" y="149" width="1" height="1" fill="#6a6a6a"/><rect x="528" y="149" width="1" height="1" fill="#6a6a6a"/><rect x="540" y="148" width="1" height="2" fill="#6a6a6a"/><rect x="551" y="149" width="1" height="1" fill="#6a6a6a"/><rect x="563" y="149" width="1" height="1" fill="#6a6a6a"/><rect x="574" y="149" width="1" height="1" fill="#6a6a6a"/><rect x="586" y="149" width="1" height="1" fill="#6a6a6a"/><rect x="597" y="145" width="1" height="5" fill="#6a6a6a"/><text x="592.66" y="144" font-size="9.8" textLength="9.70" lengthAdjust="spacingAndGlyphs" fill="#8a8a8a">50</text><rect x="609" y="149" width="1" height="1" fill="#6a6a6a"/><rect x="620" y="149" width="1" height="1" fill="#6a6a6a"/><rect x="632" y="149" width="1" height="1" fill="#6a6a6a"/><rect x="643" y="149" width="1" height="1" fill="#6a6a6a"/><rect x="655" y="148" width="1" height="2" fill="#6a6a6a"/><rect x="666" y="149" width="1" height="1" fill="#6a6a6a"/><rect x="678" y="149" width="1" height="1" fill="#6a6a6a"/><rect x="689" y="149" width="1" height="1" fill="#6a6a6a"/><rect x="701" y="149" width="1" height="1" fill="#6a6a6a"/><rect x="713" y="145" width="1" height="5" fill="#6a6a6a"/><text x="711.08" y="144" font-size="9.8" textLength="4.85" lengthAdjust="spacingAndGlyphs" fill="#8a8a8a">0</text><rect x="724" y="149" width="1" height="1" fill="#6a6a6a"/><rect x="736" y="149" width="1" height="1" fill="#6a6a6a"/><rect x="747" y="149" width="1" height="1" fill="#6a6a6a"/><rect x="759" y="149" width="1" height="1" fill="#6a6a6a"/><rect x="770" y="148" width="1" height="2" fill="#6a6a6a"/><rect x="782" y="149" width="1" height="1" fill="#6a6a6a"/><rect x="793" y="149" width="1" height="1" fill="#6a6a6a"/><rect x="805" y="149" width="1" height="1" fill="#6a6a6a"/><rect x="816" y="149" width="1" height="1" fill="#6a6a6a"/><rect x="828" y="145" width="1" height="5" fill="#6a6a6a"/><text x="823.66" y="144" font-size="9.8" textLength="9.70" lengthAdjust="spacingAndGlyphs" fill="#8a8a8a">50</text><rect x="839" y="149" width="1" height="1" fill="#6a6a6a"/><rect x="851" y="149" width="1" height="1" fill="#6a6a6a"/><rect x="862" y="149" width="1" height="1" fill="#6a6a6a"/><rect x="874" y="149" width="1" height="1" fill="#6a6a6a"/><rect x="885" y="148" width="1" height="2" fill="#6a6a6a"/><rect x="897" y="149" width="1" height="1" fill="#6a6a6a"/><rect x="908" y="149" width="1" height="1" fill="#6a6a6a"/><rect x="920" y="149" width="1" height="1" fill="#6a6a6a"/><rect x="931" y="149" width="1" height="1" fill="#6a6a6a"/><rect x="943" y="145" width="1" height="5" fill="#6a6a6a"/><text x="936.24" y="144" font-size="9.8" textLength="14.55" lengthAdjust="spacingAndGlyphs" fill="#8a8a8a">100</text><rect x="954" y="149" width="1" height="1" fill="#6a6a6a"/><rect x="966" y="149" width="1" height="1" fill="#6a6a6a"/><rect x="977" y="149" width="1" height="1" fill="#6a6a6a"/><rect x="989" y="149" width="1" height="1" fill="#6a6a6a"/><rect x="1000" y="148" width="1" height="2" fill="#6a6a6a"/><rect x="1012" y="149" width="1" height="1" fill="#6a6a6a"/><rect x="1023" y="149" width="1" height="1" fill="#6a6a6a"/><rect x="1035" y="149" width="1" height="1" fill="#6a6a6a"/><rect x="1047" y="149" width="1" height="1" fill="#6a6a6a"/><rect x="1058" y="145" width="1" height="5" fill="#6a6a6a"/><text x="1051.24" y="144" font-size="9.8" textLength="14.55" lengthAdjust="spacingAndGlyphs" fill="#8a8a8a">150</text><rect x="1070" y="149" width="1" height="1" fill="#6a6a6a"/><rect x="1081" y="149" width="1" height="1" fill="#6a6a6a"/><rect x="1093" y="149" width="1" height="1" fill="#6a6a6a"/><rect x="1104" y="149" width="1" height="1" fill="#6a6a6a"/><rect x="1116" y="148" width="1" height="2" fill="#6a6a6a"/><rect x="1127" y="149" width="1" height="1" fill="#6a6a6a"/><rect x="1139" y="149" width="1" height="1" fill="#6a6a6a"/><rect x="1150" y="149" width="1" height="1" fill="#6a6a6a"/><rect x="1162" y="149" width="1" height="1" fill="#6a6a6a"/><rect x="1173" y="145" width="1" height="5" fill="#6a6a6a"/><text x="1166.24" y="144" font-size="9.8" textLength="14.55" lengthAdjust="spacingAndGlyphs" fill="#8a8a8a">200</text><rect x="1185" y="149" width="1" height="1" fill="#6a6a6a"/><rect x="1196" y="149" width="1" height="1" fill="#6a6a6a"/><rect x="1208" y="149" width="1" height="1" fill="#6a6a6a"/><rect x="1219" y="149" width="1" height="1" fill="#6a6a6a"/><rect x="1231" y="148" width="1" height="2" fill="#6a6a6a"/><rect x="1242" y="149" width="1" height="1" fill="#6a6a6a"/><rect x="1254" y="149" width="1" height="1" fill="#6a6a6a"/><rect x="1265" y="149" width="1" height="1" fill="#6a6a6a"/><rect x="1277" y="149" width="1" height="1" fill="#6a6a6a"/><rect x="1288" y="145" width="1" height="5" fill="#6a6a6a"/><text x="1281.24" y="144" font-size="9.8" textLength="14.55" lengthAdjust="spacingAndGlyphs" fill="#8a8a8a">250</text><rect x="1300" y="149" width="1" height="1" fill="#6a6a6a"/><rect x="1311" y="149" width="1" height="1" fill="#6a6a6a"/><rect x="1323" y="149" width="1" height="1" fill="#6a6a6a"/><rect x="1334" y="149" width="1" height="1" fill="#6a6a6a"/><rect x="1346" y="148" width="1" height="2" fill="#6a6a6a"/><rect x="1357" y="149" width="1" height="1" fill="#6a6a6a"/><rect x="1369" y="149" width="1" height="1" fill="#6a6a6a"/><rect x="1381" y="149" width="1" height="1" fill="#6a6a6a"/><rect x="1392" y="149" width="1" height="1" fill="#6a6a6a"/><rect x="1404" y="145" width="1" height="5" fill="#6a6a6a"/><text x="1397.24" y="144" font-size="9.8" textLength="14.55" lengthAdjust="spacingAndGlyphs" fill="#8a8a8a">300</text><rect x="1415" y="149" width="1" height="1" fill="#6a6a6a"/><rect x="1427" y="149" width="1" height="1" fill="#6a6a6a"/><rect x="1438" y="149" width="1" height="1" fill="#6a6a6a"/><rect x="1450" y="149" width="1" height="1" fill="#6a6a6a"/><rect x="1461" y="148" width="1" height="2" fill="#6a6a6a"/><rect x="1473" y="149" width="1" height="1" fill="#6a6a6a"/><rect x="1484" y="149" width="1" height="1" fill="#6a6a6a"/><rect x="1496" y="149" width="1" height="1" fill="#6a6a6a"/><rect x="1507" y="149" width="1" height="1" fill="#6a6a6a"/><rect x="1519" y="145" width="1" height="5" fill="#6a6a6a"/><text x="1512.24" y="144" font-size="9.8" textLength="14.55" lengthAdjust="spacingAndGlyphs" fill="#8a8a8a">350</text><rect x="1530" y="149" width="1" height="1" fill="#6a6a6a"/><rect x="1542" y="149" width="1" height="1" fill="#6a6a6a"/><rect x="1553" y="149" width="1" height="1" fill="#6a6a6a"/><rect x="1565" y="149" width="1" height="1" fill="#6a6a6a"/><rect x="1576" y="148" width="1" height="2" fill="#6a6a6a"/><rect x="1588" y="149" width="1" height="1" fill="#6a6a6a"/><rect x="1599" y="149" width="1" height="1" fill="#6a6a6a"/><rect x="1611" y="149" width="1" height="1" fill="#6a6a6a"/><rect x="1622" y="149" width="1" height="1" fill="#6a6a6a"/><rect x="1634" y="145" width="1" height="5" fill="#6a6a6a"/><text x="1627.24" y="144" font-size="9.8" textLength="14.55" lengthAdjust="spacingAndGlyphs" fill="#8a8a8a">400</text><rect x="1645" y="149" width="1" height="1" fill="#6a6a6a"/><rect x="1657" y="149" width="1" height="1" fill="#6a6a6a"/><rect x="1668" y="149" width="1" height="1" fill="#6a6a6a"/><rect x="1680" y="149" width="1" height="1" fill="#6a6a6a"/><rect x="1691" y="148" width="1" height="2" fill="#6a6a6a"/><rect x="1703" y="149" width="1" height="1" fill="#6a6a6a"/><rect x="1715" y="149" width="1" height="1" fill="#6a6a6a"/><rect x="1726" y="149" width="1" height="1" fill="#6a6a6a"/><rect x="1738" y="149" width="1" height="1" fill="#6a6a6a"/><rect x="1749" y="145" width="1" height="5" fill="#6a6a6a"/><text x="1742.24" y="144" font-size="9.8" textLength="14.55" lengthAdjust="spacingAndGlyphs" fill="#8a8a8a">450</text><rect x="1761" y="149" width="1" height="1" fill="#6a6a6a"/><rect x="1772" y="149" width="1" height="1" fill="#6a6a6a"/><rect x="1784" y="149" width="1" height="1" fill="#6a6a6a"/><rect x="1795" y="149" width="1" height="1" fill="#6a6a6a"/><rect x="1807" y="148" width="1" height="2" fill="#6a6a6a"/><rect x="1818" y="149" width="1" height="1" fill="#6a6a6a"/><rect x="1830" y="149" width="1" height="1" fill="#6a6a6a"/><rect x="1841" y="149" width="1" height="1" fill="#6a6a6a"/><rect x="1853" y="149" width="1" height="1" fill="#6a6a6a"/><rect x="1864" y="145" width="1" height="5" fill="#777"/><text x="1833" y="144" font-size="10" textLength="40" lengthAdjust="spacingAndGlyphs" fill="#8a8a8a">milimetry</text><path d="M1087.5 135V150" stroke="#000" stroke-dasharray="2 2"/></svg>
<svg class="a" style="left:0;top:0" width="60" height="1080" viewBox="0 0 60 1080" font-family="Liberation Sans"><rect x="46" y="1015" width="1" height="1" fill="#6a6a6a"/><rect x="46" y="1003" width="1" height="1" fill="#6a6a6a"/><rect x="46" y="992" width="1" height="1" fill="#6a6a6a"/><rect x="45" y="980" width="2" height="1" fill="#6a6a6a"/><rect x="46" y="969" width="1" height="1" fill="#6a6a6a"/><rect x="46" y="957" width="1" height="1" fill="#6a6a6a"/><rect x="46" y="945" width="1" height="1" fill="#6a6a6a"/><rect x="46" y="934" width="1" height="1" fill="#6a6a6a"/><rect x="42" y="922" width="5" height="1" fill="#6a6a6a"/><text transform="translate(41,923.42) rotate(-90)" x="0" y="0" font-size="9.8" textLength="4.85" lengthAdjust="spacingAndGlyphs" fill="#8a8a8a">0</text><rect x="46" y="911" width="1" height="1" fill="#6a6a6a"/><rect x="46" y="899" width="1" height="1" fill="#6a6a6a"/><rect x="46" y="888" width="1" height="1" fill="#6a6a6a"/><rect x="46" y="876" width="1" height="1" fill="#6a6a6a"/><rect x="45" y="865" width="2" height="1" fill="#6a6a6a"/><rect x="46" y="853" width="1" height="1" fill="#6a6a6a"/><rect x="46" y="842" width="1" height="1" fill="#6a6a6a"/><rect x="46" y="830" width="1" height="1" fill="#6a6a6a"/><rect x="46" y="819" width="1" height="1" fill="#6a6a6a"/><rect x="42" y="807" width="5" height="1" fill="#6a6a6a"/><text transform="translate(41,810.84) rotate(-90)" x="0" y="0" font-size="9.8" textLength="9.70" lengthAdjust="spacingAndGlyphs" fill="#8a8a8a">50</text><rect x="46" y="796" width="1" height="1" fill="#6a6a6a"/><rect x="46" y="784" width="1" height="1" fill="#6a6a6a"/><rect x="46" y="773" width="1" height="1" fill="#6a6a6a"/><rect x="46" y="761" width="1" height="1" fill="#6a6a6a"/><rect x="45" y="750" width="2" height="1" fill="#6a6a6a"/><rect x="46" y="738" width="1" height="1" fill="#6a6a6a"/><rect x="46" y="727" width="1" height="1" fill="#6a6a6a"/><rect x="46" y="715" width="1" height="1" fill="#6a6a6a"/><rect x="46" y="704" width="1" height="1" fill="#6a6a6a"/><rect x="42" y="692" width="5" height="1" fill="#6a6a6a"/><text transform="translate(41,698.26) rotate(-90)" x="0" y="0" font-size="9.8" textLength="14.55" lengthAdjust="spacingAndGlyphs" fill="#8a8a8a">100</text><rect x="46" y="681" width="1" height="1" fill="#6a6a6a"/><rect x="46" y="669" width="1" height="1" fill="#6a6a6a"/><rect x="46" y="658" width="1" height="1" fill="#6a6a6a"/><rect x="46" y="646" width="1" height="1" fill="#6a6a6a"/><rect x="45" y="635" width="2" height="1" fill="#6a6a6a"/><rect x="46" y="623" width="1" height="1" fill="#6a6a6a"/><rect x="46" y="612" width="1" height="1" fill="#6a6a6a"/><rect x="46" y="600" width="1" height="1" fill="#6a6a6a"/><rect x="46" y="589" width="1" height="1" fill="#6a6a6a"/><rect x="42" y="577" width="5" height="1" fill="#6a6a6a"/><text transform="translate(41,583.26) rotate(-90)" x="0" y="0" font-size="9.8" textLength="14.55" lengthAdjust="spacingAndGlyphs" fill="#8a8a8a">150</text><rect x="46" y="565" width="1" height="1" fill="#6a6a6a"/><rect x="46" y="554" width="1" height="1" fill="#6a6a6a"/><rect x="46" y="542" width="1" height="1" fill="#6a6a6a"/><rect x="46" y="531" width="1" height="1" fill="#6a6a6a"/><rect x="45" y="519" width="2" height="1" fill="#6a6a6a"/><rect x="46" y="508" width="1" height="1" fill="#6a6a6a"/><rect x="46" y="496" width="1" height="1" fill="#6a6a6a"/><rect x="46" y="485" width="1" height="1" fill="#6a6a6a"/><rect x="46" y="473" width="1" height="1" fill="#6a6a6a"/><rect x="42" y="462" width="5" height="1" fill="#6a6a6a"/><text transform="translate(41,468.26) rotate(-90)" x="0" y="0" font-size="9.8" textLength="14.55" lengthAdjust="spacingAndGlyphs" fill="#8a8a8a">200</text><rect x="46" y="450" width="1" height="1" fill="#6a6a6a"/><rect x="46" y="439" width="1" height="1" fill="#6a6a6a"/><rect x="46" y="427" width="1" height="1" fill="#6a6a6a"/><rect x="46" y="416" width="1" height="1" fill="#6a6a6a"/><rect x="45" y="404" width="2" height="1" fill="#6a6a6a"/><rect x="46" y="393" width="1" height="1" fill="#6a6a6a"/><rect x="46" y="381" width="1" height="1" fill="#6a6a6a"/><rect x="46" y="370" width="1" height="1" fill="#6a6a6a"/><rect x="46" y="358" width="1" height="1" fill="#6a6a6a"/><rect x="42" y="347" width="5" height="1" fill="#6a6a6a"/><text transform="translate(41,353.26) rotate(-90)" x="0" y="0" font-size="9.8" textLength="14.55" lengthAdjust="spacingAndGlyphs" fill="#8a8a8a">250</text><rect x="46" y="335" width="1" height="1" fill="#6a6a6a"/><rect x="46" y="324" width="1" height="1" fill="#6a6a6a"/><rect x="46" y="312" width="1" height="1" fill="#6a6a6a"/><rect x="46" y="301" width="1" height="1" fill="#6a6a6a"/><rect x="45" y="289" width="2" height="1" fill="#6a6a6a"/><rect x="46" y="278" width="1" height="1" fill="#6a6a6a"/><rect x="46" y="266" width="1" height="1" fill="#6a6a6a"/><rect x="46" y="255" width="1" height="1" fill="#6a6a6a"/><rect x="46" y="243" width="1" height="1" fill="#6a6a6a"/><rect x="42" y="232" width="5" height="1" fill="#6a6a6a"/><text transform="translate(41,238.26) rotate(-90)" x="0" y="0" font-size="9.8" textLength="14.55" lengthAdjust="spacingAndGlyphs" fill="#8a8a8a">300</text><rect x="46" y="220" width="1" height="1" fill="#6a6a6a"/><rect x="46" y="209" width="1" height="1" fill="#6a6a6a"/><rect x="46" y="197" width="1" height="1" fill="#6a6a6a"/><rect x="46" y="185" width="1" height="1" fill="#6a6a6a"/><rect x="45" y="174" width="2" height="1" fill="#6a6a6a"/><rect x="46" y="162" width="1" height="1" fill="#6a6a6a"/><text transform="translate(41,1021) rotate(-90)" font-size="10" textLength="41" lengthAdjust="spacingAndGlyphs" fill="#8a8a8a">milimetry</text><path d="M32 280.5H48" stroke="#000" stroke-dasharray="3 3"/></svg>
<div class="a " style="left:49px;top:152px;width:1811px;height:855px;background:#fff"></div>
<div class="a " style="left:719px;top:243px;width:484px;height:685px;background:#c2c2c2"></div>
<div class="a " style="left:713px;top:239px;width:484px;height:685px;background:#fff;border:1px solid #a8a8a8;box-sizing:border-box"></div>
<svg class="a" style="left:0;top:0" width="1920" height="1080" viewBox="0 0 1920 1080"><defs><clipPath id="hc"><rect x="912" y="292" width="7" height="7"/><rect x="941" y="292" width="7" height="7"/><rect x="970" y="292" width="7" height="7"/><rect x="912" y="371" width="7" height="7"/><rect x="970" y="371" width="7" height="7"/><rect x="912" y="451" width="7" height="7"/><rect x="941" y="451" width="7" height="7"/></clipPath></defs><g fill="none" stroke="#222" stroke-width="0.9"><ellipse cx="1040.50" cy="448.80" rx="75.5" ry="10.8" transform="rotate(0 1040.50 448.80)"/><ellipse cx="1037.93" cy="429.26" rx="75.5" ry="10.8" transform="rotate(-15 1037.93 429.26)"/><ellipse cx="1030.38" cy="411.05" rx="75.5" ry="10.8" transform="rotate(-30 1030.38 411.05)"/><ellipse cx="1018.39" cy="395.41" rx="75.5" ry="10.8" transform="rotate(-45 1018.39 395.41)"/><ellipse cx="1002.75" cy="383.42" rx="75.5" ry="10.8" transform="rotate(-60 1002.75 383.42)"/><ellipse cx="984.54" cy="375.87" rx="75.5" ry="10.8" transform="rotate(-75 984.54 375.87)"/><ellipse cx="965.00" cy="373.30" rx="75.5" ry="10.8" transform="rotate(-90 965.00 373.30)"/><ellipse cx="945.46" cy="375.87" rx="75.5" ry="10.8" transform="rotate(-105 945.46 375.87)"/><ellipse cx="927.25" cy="383.42" rx="75.5" ry="10.8" transform="rotate(-120 927.25 383.42)"/><ellipse cx="911.61" cy="395.41" rx="75.5" ry="10.8" transform="rotate(-135 911.61 395.41)"/><ellipse cx="899.62" cy="411.05" rx="75.5" ry="10.8" transform="rotate(-150 899.62 411.05)"/><ellipse cx="892.07" cy="429.26" rx="75.5" ry="10.8" transform="rotate(-165 892.07 429.26)"/><ellipse cx="889.50" cy="448.80" rx="75.5" ry="10.8" transform="rotate(-180 889.50 448.80)"/><ellipse cx="892.07" cy="468.34" rx="75.5" ry="10.8" transform="rotate(-195 892.07 468.34)"/><ellipse cx="899.62" cy="486.55" rx="75.5" ry="10.8" transform="rotate(-210 899.62 486.55)"/><ellipse cx="911.61" cy="502.19" rx="75.5" ry="10.8" transform="rotate(-225 911.61 502.19)"/><ellipse cx="927.25" cy="514.18" rx="75.5" ry="10.8" transform="rotate(-240 927.25 514.18)"/><ellipse cx="945.46" cy="521.73" rx="75.5" ry="10.8" transform="rotate(-255 945.46 521.73)"/><ellipse cx="965.00" cy="524.30" rx="75.5" ry="10.8" transform="rotate(-270 965.00 524.30)"/><ellipse cx="984.54" cy="521.73" rx="75.5" ry="10.8" transform="rotate(-285 984.54 521.73)"/><ellipse cx="1002.75" cy="514.18" rx="75.5" ry="10.8" transform="rotate(-300 1002.75 514.18)"/><ellipse cx="1018.39" cy="502.19" rx="75.5" ry="10.8" transform="rotate(-315 1018.39 502.19)"/><ellipse cx="1030.38" cy="486.55" rx="75.5" ry="10.8" transform="rotate(-330 1030.38 486.55)"/><ellipse cx="1037.93" cy="468.34" rx="75.5" ry="10.8" transform="rotate(-345 1037.93 468.34)"/></g><g fill="#000"><rect x="912" y="292" width="7" height="7"/><rect x="941" y="292" width="7" height="7"/><rect x="970" y="292" width="7" height="7"/><rect x="912" y="371" width="7" height="7"/><rect x="970" y="371" width="7" height="7"/><rect x="912" y="451" width="7" height="7"/><rect x="941" y="451" width="7" height="7"/></g><g fill="none" stroke="#fff" stroke-width="0.9" clip-path="url(#hc)"><ellipse cx="1040.50" cy="448.80" rx="75.5" ry="10.8" transform="rotate(0 1040.50 448.80)"/><ellipse cx="1037.93" cy="429.26" rx="75.5" ry="10.8" transform="rotate(-15 1037.93 429.26)"/><ellipse cx="1030.38" cy="411.05" rx="75.5" ry="10.8" transform="rotate(-30 1030.38 411.05)"/><ellipse cx="1018.39" cy="395.41" rx="75.5" ry="10.8" transform="rotate(-45 1018.39 395.41)"/><ellipse cx="1002.75" cy="383.42" rx="75.5" ry="10.8" transform="rotate(-60 1002.75 383.42)"/><ellipse cx="984.54" cy="375.87" rx="75.5" ry="10.8" transform="rotate(-75 984.54 375.87)"/><ellipse cx="965.00" cy="373.30" rx="75.5" ry="10.8" transform="rotate(-90 965.00 373.30)"/><ellipse cx="945.46" cy="375.87" rx="75.5" ry="10.8" transform="rotate(-105 945.46 375.87)"/><ellipse cx="927.25" cy="383.42" rx="75.5" ry="10.8" transform="rotate(-120 927.25 383.42)"/><ellipse cx="911.61" cy="395.41" rx="75.5" ry="10.8" transform="rotate(-135 911.61 395.41)"/><ellipse cx="899.62" cy="411.05" rx="75.5" ry="10.8" transform="rotate(-150 899.62 411.05)"/><ellipse cx="892.07" cy="429.26" rx="75.5" ry="10.8" transform="rotate(-165 892.07 429.26)"/><ellipse cx="889.50" cy="448.80" rx="75.5" ry="10.8" transform="rotate(-180 889.50 448.80)"/><ellipse cx="892.07" cy="468.34" rx="75.5" ry="10.8" transform="rotate(-195 892.07 468.34)"/><ellipse cx="899.62" cy="486.55" rx="75.5" ry="10.8" transform="rotate(-210 899.62 486.55)"/><ellipse cx="911.61" cy="502.19" rx="75.5" ry="10.8" transform="rotate(-225 911.61 502.19)"/><ellipse cx="927.25" cy="514.18" rx="75.5" ry="10.8" transform="rotate(-240 927.25 514.18)"/><ellipse cx="945.46" cy="521.73" rx="75.5" ry="10.8" transform="rotate(-255 945.46 521.73)"/><ellipse cx="965.00" cy="524.30" rx="75.5" ry="10.8" transform="rotate(-270 965.00 524.30)"/><ellipse cx="984.54" cy="521.73" rx="75.5" ry="10.8" transform="rotate(-285 984.54 521.73)"/><ellipse cx="1002.75" cy="514.18" rx="75.5" ry="10.8" transform="rotate(-300 1002.75 514.18)"/><ellipse cx="1018.39" cy="502.19" rx="75.5" ry="10.8" transform="rotate(-315 1018.39 502.19)"/><ellipse cx="1030.38" cy="486.55" rx="75.5" ry="10.8" transform="rotate(-330 1030.38 486.55)"/><ellipse cx="1037.93" cy="468.34" rx="75.5" ry="10.8" transform="rotate(-345 1037.93 468.34)"/></g><path d="M942.5 372.5L948.5 378.5M948.5 372.5L942.5 378.5" stroke="#000" stroke-width="1.9"/><rect x="923.5" y="301.5" width="3" height="3" fill="#fff" stroke="#000"/></svg>
<div class="a " style="left:1860px;top:152px;width:17px;height:855px;background:#fff"></div>
<div class="a " style="left:1860px;top:152px;width:16px;height:17px;background:#f0f0f0"></div>
<svg class="a" style="left:1864px;top:158px;" width="8" height="5" viewBox="0 0 8 5"><path d="M0.5 4.5L4 1L7.5 4.5" fill="none" stroke="#555" stroke-width="1.8"/></svg>
<div class="a " style="left:1860px;top:352px;width:15px;height:455px;background:#cccccc"></div>
<div class="a " style="left:1876px;top:152px;width:1px;height:855px;background:#f3f3f3"></div>
<div class="a " style="left:1860px;top:990px;width:16px;height:17px;background:#f0f0f0"></div>
<svg class="a" style="left:1864px;top:996px;" width="8" height="5" viewBox="0 0 8 5"><path d="M0.5 0.5L4 4L7.5 0.5" fill="none" stroke="#555" stroke-width="1.8"/></svg>
<div class="a " style="left:1877px;top:113px;width:5px;height:931px;background:#fff"></div>
<div class="a " style="left:1879px;top:113px;width:1px;height:931px;background:#d0d0d0"></div>
<div class="a " style="left:49px;top:1007px;width:1811px;height:17px;background:#f2f2f2"></div>
<div class="a " style="left:49px;top:1007px;width:915px;height:1px;background:#a0a0a0"></div>
<svg class="a" style="left:52px;top:1009px;" width="10" height="13" viewBox="0 0 10 13"><path d="M0.5 12.5V0.5H5.5L9.5 4.5V12.5Z" fill="#fff" stroke="#111" stroke-width="1.1"/><path d="M5.5 0.5V4.5H9.5" fill="none" stroke="#111" stroke-width="0.8"/><path d="M4.5 6V11M2 8.5H7" stroke="#111" stroke-width="1"/></svg>
<svg class="a" style="left:70px;top:1010px;" width="8" height="10" viewBox="0 0 8 10"><path d="M0.5 0V10" stroke="#777"/><path d="M7.5 0.5L2 5L7.5 9.5Z" fill="#888"/></svg>
<svg class="a" style="left:89px;top:1010px;" width="6" height="10" viewBox="0 0 6 10"><path d="M6 0.5L0.5 5L6 9.5Z" fill="#888"/></svg>
<div class="a t" style="left:115px;top:1011px;font-size:11px">1 z 1</div>
<svg class="a" style="left:161px;top:1010px;" width="6" height="10" viewBox="0 0 6 10"><path d="M0 0.5L5.5 5L0 9.5Z" fill="#888"/></svg>
<svg class="a" style="left:176px;top:1010px;" width="8" height="10" viewBox="0 0 8 10"><path d="M7.5 0V10" stroke="#777"/><path d="M0.5 0.5L6 5L0.5 9.5Z" fill="#888"/></svg>
<svg class="a" style="left:192px;top:1009px;" width="10" height="13" viewBox="0 0 10 13"><path d="M0.5 12.5V0.5H5.5L9.5 4.5V12.5Z" fill="#fff" stroke="#111" stroke-width="1.1"/><path d="M5.5 0.5V4.5H9.5" fill="none" stroke="#111" stroke-width="0.8"/><path d="M4.5 6V11M2 8.5H7" stroke="#111" stroke-width="1"/></svg>
<div class="a " style="left:206px;top:1008px;width:1px;height:16px;background:#a0a0a0"></div>
<svg class="a" style="left:206px;top:1007px;" width="76" height="17" viewBox="0 0 76 17"><path d="M0.5 17V1 H66 L75 8V17" fill="#fff" stroke="#a8a8a8"/></svg>
<div class="a t" style="left:221px;top:1010px;font-size:11.5px">Strona 1</div>
<div class="a " style="left:282px;top:1008px;width:680px;height:16px;background:#f2f2f2"></div>
<svg class="a" style="left:959px;top:1011px;" width="3" height="9" viewBox="0 0 3 9"><path d="M1 0.5V1.5M1 3.5V4.5M1 6.5V7.5" stroke="#999" stroke-width="1"/></svg>
<div class="a " style="left:963px;top:1007px;width:1px;height:17px;background:#8a8a8a"></div>
<div class="a " style="left:964px;top:1007px;width:896px;height:17px;background:#fafafa"></div>
<div class="a " style="left:965px;top:1008px;width:16px;height:16px;background:#efefef"></div>
<svg class="a" style="left:968px;top:1011px;" width="7" height="9" viewBox="0 0 7 9"><path d="M5.5 0.8L1.5 4.5L5.5 8.2" fill="none" stroke="#444" stroke-width="2"/></svg>
<div class="a " style="left:982px;top:1008px;width:859px;height:15px;background:#cdcdcd"></div>
<div class="a " style="left:1860px;top:1007px;width:17px;height:17px;background:#fff"></div>
<div class="a " style="left:1842px;top:1008px;width:16px;height:16px;background:#ececec"></div>
<svg class="a" style="left:1847px;top:1011px;" width="6" height="9" viewBox="0 0 6 9"><path d="M1 0.5L5 4.5L1 8.5" fill="none" stroke="#333" stroke-width="1.8"/></svg>
<svg class="a" style="left:1862px;top:1009px;" width="14" height="14" viewBox="0 0 14 14"><circle cx="5" cy="5" r="4.5" fill="#fff" stroke="#4a4a68" stroke-width="1.1"/><circle cx="5" cy="5" r="1.8" fill="none" stroke="#6a6a88" stroke-width="0.9"/><path d="M5 2.5V3.5M5 6.5V7.5M2.5 5H3.5M6.5 5H7.5" stroke="#4a4a68" stroke-width="0.9"/><path d="M8.3 8.3L12.5 12.5" stroke="#2a2a40" stroke-width="2"/></svg>
<div class="a " style="left:30px;top:1024px;width:1847px;height:20px;background:#f2f2f2"></div>
<div class="a " style="left:30px;top:1025px;width:1847px;height:1px;background:#d8d8d8"></div>
<svg class="a" style="left:34px;top:1029px;" width="3" height="11" viewBox="0 0 3 11"><path d="M1 0.5V1.5M1 4.5V5.5M1 8.5V9.5" stroke="#999" stroke-width="1.2"/></svg>
<svg class="a" style="left:41px;top:1030px;" width="6" height="9" viewBox="0 0 6 9"><path d="M0 0L5.5 4.5L0 9Z" fill="#000"/></svg>
<svg class="a" style="left:52px;top:1027px;" width="14" height="14" viewBox="0 0 14 14"><path d="M1 13 L1.6 11 L7.2 5.4 L8.6 6.8 L3 12.4 Z" fill="#5a9090"/><path d="M6 5 L9 8 L10 7 L7 4Z" fill="#2a2a40"/><path d="M8 5 L10.5 2.5 A1.6 1.6 0 0 1 12.5 4.5 L10 7Z" fill="#2a2a40"/></svg>
<svg class="a" style="left:72px;top:1030px;" width="5" height="9" viewBox="0 0 5 9"><path d="M4.5 0.5L0.8 4.5L4.5 8.5" fill="none" stroke="#c8c8c8" stroke-width="1.2"/></svg>
<div class="a " style="left:83px;top:1026px;width:18px;height:18px;background:#fff;border:1px solid #4a4a4a;box-sizing:border-box"></div>
<svg class="a" style="left:84px;top:1027px;" width="16" height="16" viewBox="0 0 16 16"><path d="M0 0L16 16M16 0L0 16" stroke="#222"/></svg>
<div class="a t" style="left:746px;top:1030px;font-size:11.8px;font-style:italic;color:#a0a0a0">Przeciągnij kolory (lub obiekty) tutaj, aby przechować odpowiednie kolory w dokumencie</div>
<svg class="a" style="left:1843px;top:1030px;" width="6" height="9" viewBox="0 0 6 9"><path d="M1 0.5L5 4.5L1 8.5" fill="none" stroke="#c8c8c8" stroke-width="1.2"/></svg>
<svg class="a" style="left:1859px;top:1031px;" width="7" height="7" viewBox="0 0 7 7"><path d="M0.5 0.5L3 3.5L0.5 6.5M3.5 0.5L6 3.5L3.5 6.5" fill="none" stroke="#aaa" stroke-width="0.9"/></svg>
<div class="a " style="left:1877px;top:1024px;width:5px;height:20px;background:#fff"></div>
<div class="a " style="left:1879px;top:1024px;width:1px;height:18px;background:#d0d0d0"></div>
<div class="a " style="left:0px;top:1044px;width:1920px;height:1px;background:#dcdcdc"></div>
<div class="a " style="left:0px;top:1045px;width:1920px;height:32px;background:#f2f2f2"></div>
<div class="a " style="left:0px;top:1077px;width:1920px;height:1px;background:#fff"></div>
<div class="a " style="left:0px;top:1078px;width:1920px;height:2px;background:#000"></div>
<div class="a t" style="left:5px;top:1056px;font-size:10.9px">( 162,533; 278,980 )</div>
<div class="a " style="left:112px;top:1054px;width:14px;height:14px;background:#fff;border:1px solid #111;box-sizing:border-box"></div>
<svg class="a" style="left:115px;top:1057px;" width="8" height="9" viewBox="0 0 8 9"><path d="M1 0.5L7 4.5L1 8.5Z" fill="#000"/></svg>
<div class="a t" style="left:158px;top:1056px;font-size:11.2px">Elipsa na Warstwa 1</div>
<svg class="a" style="left:1466px;top:1054px;" width="16" height="16" viewBox="0 0 16 16"><rect x="0.5" y="0.5" width="14" height="12" rx="1" fill="#fff" stroke="#6a6a88"/><rect x="1.5" y="1.5" width="12" height="3" fill="#c09090"/><rect x="1.5" y="4.5" width="12" height="3" fill="#70a070"/><rect x="1.5" y="7.5" width="12" height="4" fill="#90a8d0"/><circle cx="7.5" cy="6.5" r="2.6" fill="#fff" stroke="#111" stroke-width="1.2"/><path d="M3 14.5H12" stroke="#6a6a88" stroke-width="1"/></svg>
<svg class="a" style="left:1494px;top:1053px;" width="17" height="17" viewBox="0 0 17 17"><path d="M1 9 L6.5 3.5 L12 9 L6.5 14.5 Z" fill="#fff" stroke="#55557a" stroke-width="1.1"/><path d="M1.8 9 H11.2 L6.5 13.8Z" fill="#f08a10"/><path d="M5 1 L6.5 3 L8 1" fill="none" stroke="#55557a" stroke-width="0.9"/><path d="M6.5 3.5 V8" stroke="#55557a" stroke-width="0.9"/><circle cx="7" cy="8" r="0.8" fill="#55557a"/><path d="M11.5 8.5 Q14 8 14.3 12.5" fill="none" stroke="#f08a10" stroke-width="1.2"/></svg>
<div class="a " style="left:1516px;top:1052px;width:18px;height:18px;background:#fff;border:1px solid #a0a0a0;box-sizing:border-box"></div>
<svg class="a" style="left:1517px;top:1053px;" width="16" height="16" viewBox="0 0 16 16"><path d="M0 0L16 16M16 0L0 16" stroke="#111"/></svg>
<div class="a t" style="left:1537px;top:1056px;font-size:11.5px">Brak</div>
<div class="a " style="left:1698px;top:1050px;width:1px;height:23px;background:#d8d8d8"></div>
<svg class="a" style="left:1707px;top:1053px;" width="9" height="16" viewBox="0 0 9 16"><path d="M4.5 0.5 L1 8 L4.5 11 L8 8Z" fill="#fff" stroke="#4a4a60"/><path d="M4.5 3V8" stroke="#4a4a60"/><rect x="0.5" y="12.5" width="8" height="3" fill="#fff" stroke="#4a4a60"/></svg>
<div class="a " style="left:1726px;top:1053px;width:17px;height:17px;background:#1a1a1a;border:1px solid #555;box-sizing:border-box"></div>
<div class="a t" style="left:1746px;top:1056px;font-size:11px">C:0 M:0 Y:0 K:100</div>
<div class="a t" style="left:1842px;top:1056px;font-size:11.3px">0,200 mm</div>
<div class="a " style="left:1882px;top:113px;width:19px;height:931px;background:#e8e8e8"></div>
<svg class="a" style="left:1887px;top:117px;" width="9" height="9" viewBox="0 0 9 9"><path d="M1 1L8 8M8 1L1 8" stroke="#a8a8a8" stroke-width="1.3"/></svg>
<div class="a " style="left:1882px;top:132px;width:19px;height:147px;background:#b4b4b4"></div>
<svg class="a" style="left:1884px;top:136px;" width="16" height="16" viewBox="0 0 16 16"><circle cx="1.8" cy="2.5" r="1.5" fill="#fff" stroke="#55557a" stroke-width="1.1"/><path d="M3.3 2.5H5.5" stroke="#55557a" stroke-width="1.2"/><rect x="5.5" y="0.5" width="3" height="4.5" fill="#8a8aaa" stroke="#55557a"/><path d="M1.8 4.5V15" stroke="#fff" stroke-dasharray="1 1" stroke-width="1.2"/><path d="M7 5.5V15" stroke="#111" stroke-dasharray="1.2 0.8" stroke-width="1.2"/><path d="M8 6.5H11M8 9.5H11M8 14H11" stroke="#fff" stroke-dasharray="1 1"/><circle cx="12.5" cy="6.3" r="1.4" fill="#fff" stroke="#55557a"/><rect x="10.5" y="8.5" width="4" height="3.5" fill="#8a8aaa" stroke="#55557a"/><circle cx="12.5" cy="14" r="1.4" fill="#fff" stroke="#55557a"/></svg>
<div class="a t" style="left:1885px;top:156px;font-size:12px;color:#111;transform-origin:0 0;transform:translate(13px,0) rotate(90deg)">Menedżer obiektów</div>
<svg class="a" style="left:1884px;top:297px;" width="16" height="16" viewBox="0 0 16 16"><circle cx="8" cy="8" r="7.5" fill="none" stroke="#b4b4b4"/><path d="M8 3V13M3 8H13" stroke="#b4b4b4" stroke-width="2"/></svg>
<div class="a " style="left:1901px;top:113px;width:19px;height:53px;background:#f2f2f2"></div>
<svg class="a" style="left:1904px;top:117px;" width="12" height="3" viewBox="0 0 12 3"><path d="M0.5 1.5H1.8M4.5 1.5H5.8M8.5 1.5H9.8" stroke="#8a8a8a" stroke-width="1.3"/></svg>
<svg class="a" style="left:1908px;top:124px;" width="7" height="8" viewBox="0 0 7 8"><path d="M0 0L6.5 4L0 8Z" fill="#000"/></svg>
<svg class="a" style="left:1904px;top:136px;" width="14" height="14" viewBox="0 0 14 14"><path d="M1 13 L1.6 11 L7.2 5.4 L8.6 6.8 L3 12.4 Z" fill="#c8c8c8"/><path d="M6 5 L9 8 L10 7 L7 4Z" fill="#c0c0c0"/><path d="M8 5 L10.5 2.5 A1.6 1.6 0 0 1 12.5 4.5 L10 7Z" fill="#c0c0c0"/></svg>
<svg class="a" style="left:1907px;top:155px;" width="10" height="6" viewBox="0 0 10 6"><path d="M0.5 5.5L5 1L9.5 5.5" fill="none" stroke="#d0d0d0" stroke-width="1"/></svg>
<svg class="a" style="left:1902px;top:166px" width="18" height="839" viewBox="0 0 18 839"><rect x="0" y="0" width="18" height="840" fill="#4a4a4a"/><rect x="1" y="1" width="16" height="16" fill="#fff"/><path d="M2 2L16 16M16 2L2 16" stroke="#222"/><rect x="1" y="18" width="16" height="16" fill="#1a1a1a"/><rect x="1" y="35" width="16" height="16" fill="#2f2f2f"/><rect x="1" y="52" width="16" height="16" fill="#4a4a4a"/><rect x="1" y="69" width="16" height="16" fill="#616161"/><rect x="1" y="86" width="16" height="16" fill="#7b7b7b"/><rect x="1" y="103" width="16" height="16" fill="#959595"/><rect x="1" y="120" width="16" height="16" fill="#adaeb0"/><rect x="1" y="137" width="16" height="16" fill="#c5c7c7"/><rect x="1" y="154" width="16" height="16" fill="#dcdddd"/><rect x="1" y="171" width="16" height="16" fill="#ededed"/><rect x="1" y="188" width="16" height="16" fill="#ffffff"/><rect x="1" y="205" width="16" height="16" fill="#2e3192"/><rect x="1" y="222" width="16" height="16" fill="#00a0dc"/><rect x="1" y="239" width="16" height="16" fill="#00a651"/><rect x="1" y="256" width="16" height="16" fill="#ffe600"/><rect x="1" y="273" width="16" height="16" fill="#e12d24"/><rect x="1" y="290" width="16" height="16" fill="#e6007e"/><rect x="1" y="307" width="16" height="16" fill="#a54b90"/><rect x="1" y="324" width="16" height="16" fill="#ff8200"/><rect x="1" y="341" width="16" height="16" fill="#ffc4c4"/><rect x="1" y="358" width="16" height="16" fill="#7f706a"/><rect x="1" y="375" width="16" height="16" fill="#ddd8f4"/><rect x="1" y="392" width="16" height="16" fill="#b3a3e0"/><rect x="1" y="409" width="16" height="16" fill="#7b98d4"/><rect x="1" y="426" width="16" height="16" fill="#8a6fcc"/><rect x="1" y="443" width="16" height="16" fill="#9a8fba"/><rect x="1" y="460" width="16" height="16" fill="#4c5f8a"/><rect x="1" y="477" width="16" height="16" fill="#534f6d"/><rect x="1" y="494" width="16" height="16" fill="#6d7e98"/><rect x="1" y="511" width="16" height="16" fill="#0b96d2"/><rect x="1" y="528" width="16" height="16" fill="#b1ddf3"/><rect x="1" y="545" width="16" height="16" fill="#b8c8d2"/><rect x="1" y="562" width="16" height="16" fill="#98a4a8"/><rect x="1" y="579" width="16" height="16" fill="#6e787c"/><rect x="1" y="596" width="16" height="16" fill="#3f4749"/><rect x="1" y="613" width="16" height="16" fill="#526a66"/><rect x="1" y="630" width="16" height="16" fill="#4d8a78"/><rect x="1" y="647" width="16" height="16" fill="#769590"/><rect x="1" y="664" width="16" height="16" fill="#5dab9a"/><rect x="1" y="681" width="16" height="16" fill="#63a67c"/><rect x="1" y="698" width="16" height="16" fill="#7fd5df"/><rect x="1" y="715" width="16" height="16" fill="#62adba"/><rect x="1" y="732" width="16" height="16" fill="#b7c6b6"/><rect x="1" y="749" width="16" height="16" fill="#e1f7e1"/><rect x="1" y="766" width="16" height="16" fill="#b1edbf"/><rect x="1" y="783" width="16" height="16" fill="#96a096"/><rect x="1" y="800" width="16" height="16" fill="#949c7c"/><rect x="1" y="817" width="16" height="16" fill="#c2c679"/><rect x="1" y="834" width="16" height="5" fill="#b8c898"/></svg>
<div class="a " style="left:1902px;top:1005px;width:17px;height:39px;background:#f2f2f2"></div>
<svg class="a" style="left:1906px;top:1010px;" width="10" height="6" viewBox="0 0 10 6"><path d="M0.5 0.5L5 5L9.5 0.5" fill="none" stroke="#c0c0c0" stroke-width="1"/></svg>
<svg class="a" style="left:1906px;top:1025px;" width="9" height="7" viewBox="0 0 9 7"><path d="M0.5 0.5L3.5 3.5L0.5 6.5M4.5 0.5L7.5 3.5L4.5 6.5" fill="none" stroke="#b0b0b0" stroke-width="0.9"/></svg>
</body></html>
